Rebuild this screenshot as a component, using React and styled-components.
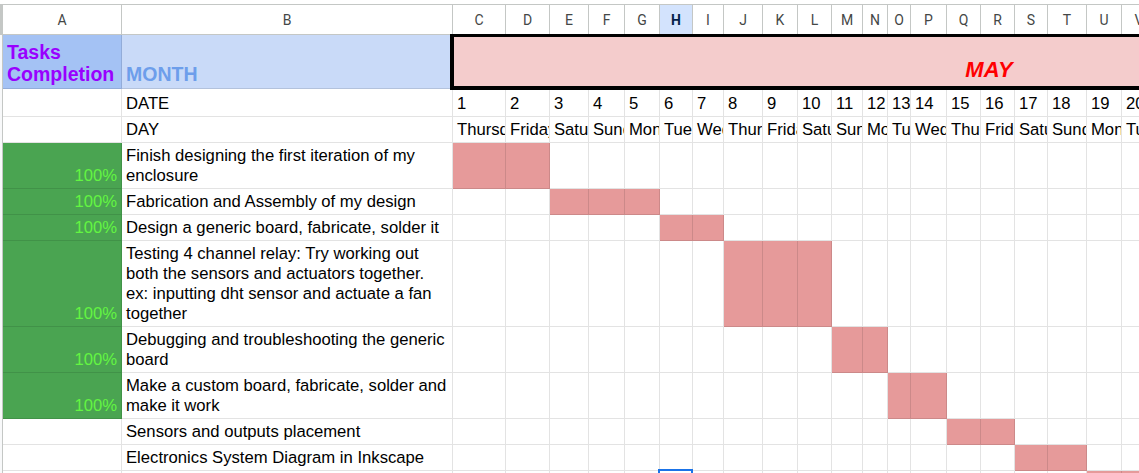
import React from "react";
import styled, { createGlobalStyle, css } from "styled-components";

const COLS = [3, 119, 331, 53, 44, 39, 36, 35, 33, 31, 39, 35, 34, 31, 25, 23, 36, 34, 34, 33, 39, 35, 35, 367];
const TEMPLATE = COLS.map((w) => `${w}px`).join(" ");
const LETTERS = "CDEFGHIJKLMNOPQRSTUV".split("");
const DAYS = ["Thursday", "Friday", "Saturday", "Sunday", "Monday", "Tuesday", "Wednesday"];
const ACTIVE = "H";

const TASKS = [
  { done: true, h: 46, text: "Finish designing the first iteration of my enclosure", bars: "CD" },
  { done: true, h: 26, text: "Fabrication and Assembly of my design", bars: "EFG" },
  { done: true, h: 26, text: "Design a generic board, fabricate, solder it", bars: "HI" },
  {
    done: true,
    h: 86,
    text: "Testing 4 channel relay: Try working out both the sensors and actuators together. ex: inputting dht sensor and actuate a fan together",
    bars: "JKL",
  },
  { done: true, h: 46, text: "Debugging and troubleshooting the generic board", bars: "MN" },
  { done: true, h: 46, text: "Make a custom board, fabricate, solder and make it work", bars: "OP" },
  { done: false, h: 26, text: "Sensors and outputs placement", bars: "QR" },
  { done: false, h: 26, text: "Electronics System Diagram in Inkscape", bars: "ST" },
  { done: false, h: 26, text: "", bars: "UV", selected: "H" },
];

const GlobalStyle = createGlobalStyle`
  html, body {
    margin: 0;
    padding: 0;
    background: #ffffff;
    overflow: hidden;
  }
  body {
    font-family: "Liberation Sans", Arial, sans-serif;
  }
`;

const Sheet = styled.div`
  width: 1139px;
  height: 473px;
  overflow: hidden;
  padding-top: 4px;
  box-sizing: border-box;
  display: flex;
  flex-direction: column;
  background: #ffffff;
`;

const Row = styled.div`
  display: grid;
  grid-template-columns: ${TEMPLATE};
  height: ${(p) => p.$h}px;
  flex: none;
  box-sizing: border-box;
`;

const HeaderRow = styled(Row)`
  border-top: 1px solid #c4c7c5;
`;

const Corner = styled.div`
  background: #c4c7c5;
`;

const Gutter = styled.div`
  background: #f8f9fa;
  border-right: 1px solid #c4c7c5;
  box-sizing: border-box;
`;

const ColHead = styled.div`
  display: flex;
  align-items: center;
  justify-content: center;
  box-sizing: border-box;
  border-right: 1px solid #c4c7c5;
  border-bottom: 1px solid #c4c7c5;
  font-family: Roboto, "Liberation Sans", Arial, sans-serif;
  font-size: 14px;
  color: #444746;
  background: #ffffff;
  ${(p) =>
    p.$active &&
    css`
      background: #d3e3fd;
      color: #041e49;
      font-weight: 700;
    `}
`;

const Cell = styled.div`
  position: relative;
  display: flex;
  align-items: flex-end;
  justify-content: ${(p) => (p.$right ? "flex-end" : "flex-start")};
  box-sizing: border-box;
  min-width: 0;
  padding: 0 4px 2px;
  border-right: 1px solid rgba(0, 0, 0, 0.11);
  border-bottom: 1px solid rgba(0, 0, 0, 0.11);
  background: ${(p) => p.$bg || "#ffffff"};
  color: ${(p) => p.$color || "#000000"};
  font-size: 16.667px;
  line-height: 20px;
  white-space: ${(p) => (p.$wrap ? "normal" : "nowrap")};
  overflow: ${(p) => (p.$selected ? "visible" : "hidden")};
  ${(p) =>
    p.$selected &&
    css`
      z-index: 2;
      &::after {
        content: "";
        position: absolute;
        top: -2px;
        left: -2px;
        right: -1px;
        bottom: -1px;
        border: 2px solid #1a73e8;
      }
    `}
`;

const CellText = styled.span`
  flex: none;
`;

const TitleCell = styled(Cell)`
  font-size: 19.5px;
  font-weight: 700;
  line-height: 22px;
  padding-bottom: 3px;
  white-space: normal;
`;

const MonthCell = styled.div`
  grid-column: 4 / -1;
  position: relative;
  z-index: 1;
  display: flex;
  align-items: flex-end;
  justify-content: center;
  box-sizing: border-box;
  margin: -1px 0 -1px -3px;
  padding-bottom: 3px;
  background: #f4cccc;
  border-top: 3px solid #000000;
  border-bottom: 4px solid #000000;
  border-left: 4px solid #000000;
  color: #ff0000;
  font-size: 22px;
  font-weight: 700;
  font-style: italic;
  line-height: 26px;
`;

const GREEN = "#4aa451";
const GREEN_TEXT = "#63f542";
const BAR = "#e69a9a";

function Header() {
  return (
    <HeaderRow $h={31}>
      <Corner />
      <ColHead>A</ColHead>
      <ColHead>B</ColHead>
      {LETTERS.map((l) => (
        <ColHead key={l} $active={l === ACTIVE}>
          {l}
        </ColHead>
      ))}
      <ColHead />
    </HeaderRow>
  );
}

function TaskRow({ task }) {
  return (
    <Row $h={task.h}>
      <Gutter />
      <Cell $bg={task.done ? GREEN : "#ffffff"} $color={GREEN_TEXT} $right>
        {task.done ? "100%" : ""}
      </Cell>
      <Cell $wrap>{task.text}</Cell>
      {LETTERS.map((l) => (
        <Cell key={l} $bg={task.bars.includes(l) ? BAR : "#ffffff"} $selected={task.selected === l} />
      ))}
      <Cell />
    </Row>
  );
}

export default function App() {
  return (
    <>
      <GlobalStyle />
      <Sheet>
        <Header />
        <Row $h={54}>
          <Gutter />
          <TitleCell $bg="#a4c2f4" $color="#9900ff">
            Tasks Completion
          </TitleCell>
          <TitleCell $bg="#c9daf8" $color="#6d9eeb">
            MONTH
          </TitleCell>
          <MonthCell>MAY</MonthCell>
        </Row>
        <Row $h={28}>
          <Gutter />
          <Cell />
          <Cell>DATE</Cell>
          {LETTERS.map((l, i) => (
            <Cell key={l}>
              <CellText>{i + 1}</CellText>
            </Cell>
          ))}
          <Cell />
        </Row>
        <Row $h={26}>
          <Gutter />
          <Cell />
          <Cell>DAY</Cell>
          {LETTERS.map((l, i) => (
            <Cell key={l}>
              <CellText>{DAYS[i % 7]}</CellText>
            </Cell>
          ))}
          <Cell />
        </Row>
        {TASKS.map((t, i) => (
          <TaskRow key={i} task={t} />
        ))}
      </Sheet>
    </>
  );
}
